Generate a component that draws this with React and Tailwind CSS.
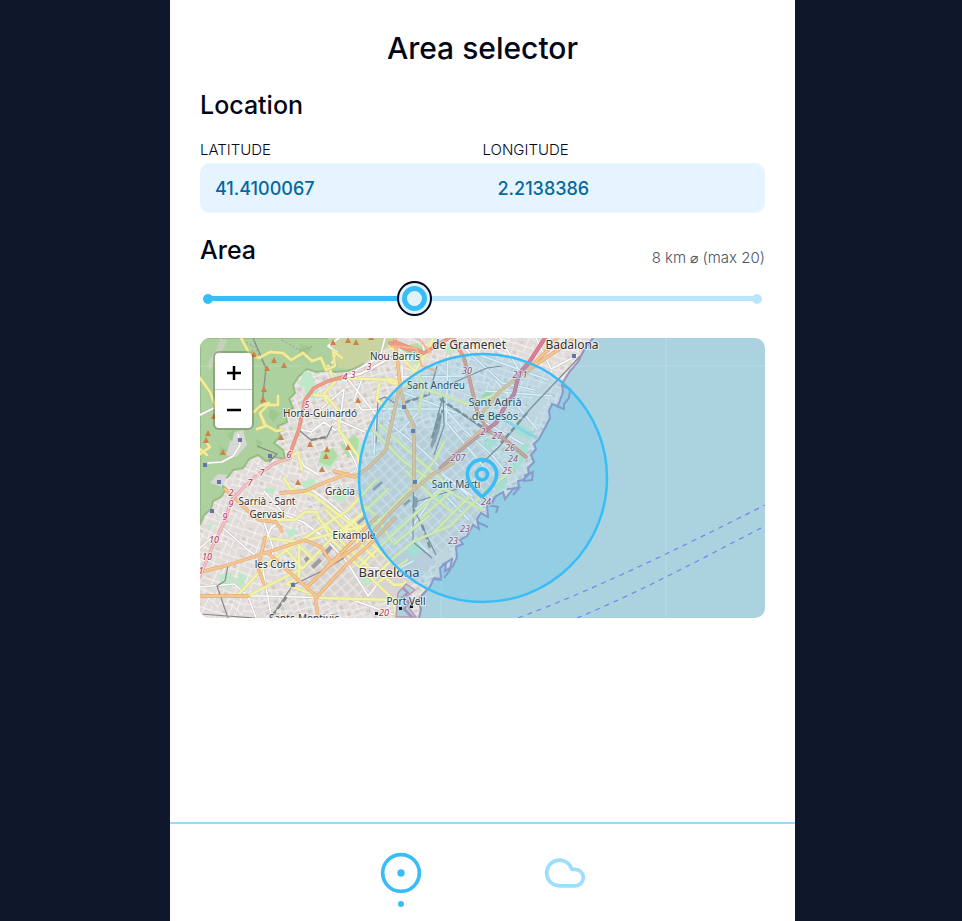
import React, { useState } from "react";
import { CircleDot, Cloud, MapPin } from "lucide-react";

const COAST =
  "M393 0L384 12L378 24L370 33L365 41L362 46L363 54L358 68L352 66L349 73L350 80L346 88L339 101L334 106L336 111L331 117L334 124L328 130L329 136L323 142L318 143L319 149L313 151L305 161L303 154L295 159L292 165L287 166L288 179L281 175L277 181L279 191L273 187L267 198L260 202L263 206L256 209L257 219L253 228L245 233L246 225L240 230L241 241L234 240L230 249L224 255L218 262L221 271L219 280";
const LAND = COAST + "L0 280L0 0Z";
const FOREST =
  "M0 0H196L187 6L178 17L167 21L159 29L147 33L135 34L128 32L117 34L107 31L99 38L93 47L95 55L89 61L93 70L85 74L87 84L78 88L80 98L74 105L83 112L85 121L75 119L66 123L58 117L49 121L43 130L33 132L28 139L17 143L26 151L21 159L13 163L11 171L4 177L0 187Z";

const PARKS = [
  "M104 33l8 3l3 10l-7 6l-9-5z", "M104 47l14 3l-3 11l-10-2z", "M151 108l9-4l7 6l-6 7l-9 3z",
  "M121 114l12-3l6 8l-9 12l-12-4z", "M139 148l9 5l-4 12l-12-4z", "M101 144l13-4l3 8l-12 5z",
  "M20 237l11-3l5 10l-8 8l-9-6z", "M39 234l8 4l-5 12l-6-4z", "M86 193l8-3l4 5l-9 5z",
  "M206 208l11-6l8 8l-12 10z", "M214 13l9 3l-4 13l-8-5z", "M246 5l11 5l-6 7l-8-5z",
  "M282 107l9-8l7 4l-10 12z", "M318 85l15 8l-3 9l-17-8z", "M316 111l13-7l-4 16l-9 14l-5-5z",
  "M237 155l9 3l-6 8l-7-4z", "M296 147l12-8l-3 10l-10 7z", "M131 39l9-2l-5 8z",
  "M6 188l7-3l-3 8z", "M65 150l12 1l-4 5l-9-2z", "M161 242l7-5l7 6l-10 5z", "M203 158l8 2l-3 7l-7-3z",
];

const RAIL = [
  "M232 100L243 58L244 88L234 117M246 66L258 73L286 93", "M176 105L178 62L185 59L196 66",
  "M214 88L213 204L232 220", "M215 164L257 151M213 169L236 217", "M388 10L330 71L300 108L282 125",
  "M204 64L229 57L237 28M248 47L287 30L302 28", "M0 276L55 280", "M27 228L101 202",
  "M72 278L93 247L122 233L144 220", "M100 93L111 102L127 99L132 88", "M57 108L77 116L69 124",
  "M28 227L25 243L17 248L28 280M53 0L66 30L62 66",
];

const WHITE_ROADS = [
  "M0 77L14 70L20 62M132 25L137 14L128 8L139 0M162 41L154 62L162 72L195 70",
  "M99 91L111 94L124 84L135 92L141 89", "M88 119L98 115L104 128L119 137",
  "M38 96L40 107L33 118L22 124L8 125", "M0 210L23 190L48 212L61 221L71 277M64 184L73 210L72 230",
  "M64 153L85 177L103 184L125 200L147 224L168 258", "M111 151L125 161L152 184L173 206",
  "M0 249L34 246L48 258L56 280M63 210L71 190L85 179M0 258H64L194 262",
  "M175 71H245L263 91L292 117L305 133M186 83L222 112L241 130",
  "M195 39L264 38M202 27L203 62M222 71L199 94M194 51L257 75M248 17L246 84L285 130",
  "M246 141L208 194L228 214M216 171L250 142L285 172M228 140L269 182M242 136L272 158",
  "M122 70L144 51L139 92L156 126L160 137M131 79L165 94M148 41L176 77L174 116",
  "M262 8L302 45L335 52M274 15L348 42M285 53L352 58M295 42L337 91M272 77L323 106",
  "M185 0L180 19L151 35M221 0L225 16M300 0L318 30M336 0L351 31L378 17",
  "M168 258L183 239L213 223M158 229L179 230M150 261L195 277",
];

const YELLOW_ROADS = [
  "M128 28L135 44L124 55L138 72L139 92L158 118L159 130", "M114 57L125 58L127 65M144 40L192 42M179 46L177 62L187 69",
  "M81 125L98 114L102 132", "M84 140L91 151L113 157L153 188L182 216L200 231",
  "M68 182H95L105 174H116L132 202L156 226L194 262L196 280", "M64 200L100 204L147 192L177 185L217 145L235 122L244 104",
  "M38 257L68 225L103 201L148 172L176 142", "M48 258L103 230L135 197L164 174L188 151",
  "M99 209V239L86 246L121 260L196 262", "M126 172L150 197L174 219", "M118 180L146 208L168 228",
  "M95 203L113 222M88 214L101 229M160 228L190 199L228 164L247 147",
  "M175 238L196 218L214 203L250 188L272 166L298 143L312 133", "M173 92L202 122L234 145L282 172",
  "M180 87L214 118L245 145", "M190 41L240 56L270 67L303 53", "M190 9L218 36L224 46L219 73",
  "M180 243L207 222M194 206L229 178M221 180L251 154M233 195L269 159", "M162 167L176 177L192 204",
  "M152 182L164 195M140 196L169 169M206 133L227 154L252 174", "M189 44L205 48L226 16L233 0",
  "M194 268L205 244M187 241L194 247L206 246",
];

const ORANGE_ROADS = [
  "M25 151L48 173L59 182L76 184L82 193M81 155L105 153L126 144L148 136",
  "M0 234L25 228L105 202L121 209L132 226M65 200L58 230L64 246M0 258H48",
  "M68 215L115 257L118 280M107 249L131 226L157 208L176 191L189 176L211 154L233 136L253 125",
  "M116 260L145 228L169 207L195 180M122 234L149 207L177 179M134 133L155 139L169 129L186 112L191 88L200 47L195 0",
  "M195 0L200 47L205 70L214 88V150", "M283 74L300 53L325 34L351 9L357 0",
  "M325 36L338 25L364 8L374 0M240 130L266 106L286 88",
];

const YELLOW_TRACKS = [
  "M41 0L49 15L59 20L70 14L83 15L91 22L103 15L112 23L121 20L126 32L135 28L133 13L142 20",
  "M0 40L10 54L16 70M78 58V67L68 67L60 75L64 86L76 93L82 92M0 116L10 109L6 104",
  "M54 74L60 68L69 65M60 75L66 88L57 91M0 111L7 117",
];

const PEAKS = [
  [54, 17], [74, 23], [84, 28], [67, 31], [64, 52], [63, 62], [14, 79], [8, 96], [6, 103], [23, 115],
  [81, 100], [110, 107], [127, 112], [126, 119], [148, 110], [122, 132], [98, 145], [158, 63],
  [133, 5], [148, 3], [156, 5], [171, 0],
];

const STATIONS = [[40, 102], [70, 118], [5, 127], [19, 144], [12, 173], [93, 247], [204, 69], [213, 93], [374, 18], [215, 144]];

const PLACES = [
  { x: 269, y: 11, size: 12, text: "de Gramenet" },
  { x: 372, y: 11, size: 12, text: "Badalona" },
  { x: 195, y: 22, size: 10, text: "Nou Barris" },
  { x: 236, y: 51, size: 10, text: "Sant Andreu" },
  { x: 295, y: 68, size: 11, text: "Sant Adrià" },
  { x: 295, y: 82, size: 11, text: "de Besòs" },
  { x: 120, y: 79, size: 10, text: "Horta-Guinardó" },
  { x: 256, y: 150, size: 10, text: "Sant Martí" },
  { x: 140, y: 157, size: 10, text: "Gràcia" },
  { x: 67, y: 167, size: 10, text: "Sarrià - Sant" },
  { x: 67, y: 180, size: 10, text: "Gervasi" },
  { x: 154, y: 201, size: 10, text: "Eixample" },
  { x: 75, y: 230, size: 10, text: "les Corts" },
  { x: 189, y: 239, size: 13, text: "Barcelona" },
  { x: 206, y: 267, size: 10, text: "Port Vell" },
  { x: 104, y: 284, size: 10, text: "Sants-Montjuïc" },
];

const EXITS = [
  [107, 70, "5"], [145, 42, "4"], [153, 40, "3"], [169, 32, "3"], [89, 120, "6"], [62, 138, "7"],
  [50, 148, "7"], [31, 158, "2"], [31, 169, "9"], [25, 182, "9"], [14, 205, "10"], [7, 222, "10"],
  [1, 236, "1"], [267, 36, "30"], [320, 40, "211"], [283, 97, "2"], [297, 101, "27"], [310, 113, "26"],
  [313, 124, "24"], [307, 136, "25"], [258, 123, "207"], [286, 167, "24"], [265, 194, "23"],
  [253, 206, "23"], [184, 278, "20"],
];

function Roads({ paths, casing, color, width }) {
  const d = paths.join("");
  return (
    <g fill="none" strokeLinejoin="round" strokeLinecap="round">
      <path d={d} stroke={casing} strokeWidth={width + 1} />
      <path d={d} stroke={color} strokeWidth={width} />
    </g>
  );
}

function CityMap() {
  return (
    <svg
      viewBox="0 0 565 280"
      preserveAspectRatio="xMidYMid slice"
      className="block h-full w-full font-['Noto_Sans',sans-serif]"
      role="img"
      aria-label="Map of Barcelona"
    >
      <defs>
        <pattern id="blocks" width="9" height="8" patternUnits="userSpaceOnUse" patternTransform="rotate(-42)">
          <rect width="9" height="8" fill="#dcd8d5" />
          <rect x="1.5" y="1.5" width="6" height="5" fill="#d6d2cf" />
          <path d="M0 0H9M0 0V8" stroke="#f4f3f2" strokeWidth="1.2" />
        </pattern>
        <pattern id="lanes" width="27" height="23" patternUnits="userSpaceOnUse" patternTransform="rotate(-24)">
          <rect width="27" height="23" fill="#dfdbd8" />
          <path d="M2 2h4v2h-4zM9 7h5v2h-5zM18 3h3v4h-3zM22 12h3v4h-3zM4 14h6v2h-6zM14 17h4v3h-4z" fill="#d0cac6" />
          <path d="M0 0H27M0 6L12 5L27 10M0 12L15 14L27 17M0 18L13 19M0 0V23M8 0L7 12L10 23M16 0L15 14M21 8L20 23" stroke="#f4f2f0" strokeWidth="1" fill="none" />
        </pattern>
        <pattern id="suburb" width="25" height="29" patternUnits="userSpaceOnUse" patternTransform="rotate(18)">
          <rect width="25" height="29" fill="#e1dcda" />
          <path d="M2 2h3v3h-3zM10 8h5v2h-5zM18 15h3v4h-3zM5 20h4v2h-4z" fill="#d3ccc8" />
          <path d="M0 0H25M0 6L25 8M0 14L12 12L25 18M0 23L25 24M0 0V29M7 0L8 14M14 7L12 29M20 0L19 24" stroke="#f7f4f2" strokeWidth="1" fill="none" />
        </pattern>
        <clipPath id="land"><path d={LAND} /></clipPath>
      </defs>

      <rect width="565" height="280" fill="#aad3df" />
      <g clipPath="url(#land)">
        <rect width="400" height="280" fill="url(#lanes)" />
        <path d="M0 150L30 130L90 110L120 140L100 190L50 280H0ZM190 0H400V60L300 110L250 60L200 40Z" fill="url(#suburb)" />
        <path d="M110 185L170 130L213 88L262 95L312 130L290 172L215 245L180 262L120 262L95 228Z" fill="url(#blocks)" />
        <path d="M180 232L215 205L235 220L215 245L190 262H172Z" fill="#d8d4d6" />
        <path d="M335 55L349 43L344 66L326 96L316 91ZM310 92L333 100L319 128L306 124ZM236 218L247 211L253 220L235 242Z" fill="#e0ddd6" />
        <path d={FOREST} fill="#add19e" stroke="#98bd83" strokeWidth="2" />
        <path d="M128 0H196L174 20L150 31L139 30L132 14Z" fill="#c8d4a0" />
        <path d="M20 0l-4 12l-8 12l1 10l5-9l8-10l5-13z" fill="#c3d2ba" />
        <path d="M10 145L18 136L27 137L22 149ZM33 95L43 92L47 107L36 119L26 117Z" fill="#d6d8d3" />
        <path d="M100 6l12 3l-4 7l-9-3zM27 96l8-5l-3 13zM70 70l10 5l-6 9l-5-5zM20 108l7 4l-8 7zM55 100l8 5l-5 7z" fill="#9fc98e" />
        <path d={PARKS.join("")} fill="#bfe8c8" />
        <path d="M199 10l18-5l10 8l-12 8zM281 58l8-7l5 7l-9 8zM122 113l11-3l5 8l-8 10l-11-4zM140 107l11-4l4 6l-9 7zM145 104l9-8l5 6l-3 16l-9 2z" fill="#b3dba6" />

        <g fill="#9d9c9f">
          <path d="M238 74l4 2l-2 14l-4 13l-4 8l-2-4l4-10zM104 221l4-4l3 3l-5 5zM111 228l8-8l3 3l-8 8zM122 216l8-9l3 3l-8 9zM214 158l4 2l-1 10l-5-1z" />
          <path d="M172 151l9-8l2 2l-9 8zM203 166l6-5l2 2l-6 5zM155 186l9-8l2 2l-9 8z" />
        </g>
        <Roads paths={WHITE_ROADS} casing="#c5c1bf" color="#ffffff" width={1.6} />
        <g fill="none" stroke="#868889">
          <path d={RAIL.join("")} strokeWidth="1.2" />
          <path d="M232 100L243 72M204 65L227 57M240 61L287 92M327 75L301 105M72 278L88 257M111 102L127 99M222 187L230 210" strokeWidth="2.5" strokeDasharray="6 3" />
        </g>
        <Roads paths={YELLOW_ROADS} casing="#d8d896" color="#f2f3a9" width={2.4} />
        <Roads paths={ORANGE_ROADS} casing="#dda36d" color="#f7c58f" width={2.4} />
        <Roads paths={["M195 4L224 15L239 6L249 0M190 5L210 12M253 0L264 20L270 43L277 73L288 93L303 100L326 119", "M90 116L99 91L105 62L114 50L128 43L147 38"]} casing="#d98573" color="#ee9c85" width={2.6} />
        <Roads paths={["M147 38L160 36L172 30L190 20"]} casing="#c9a8a0" color="#ffffff" width={2.4} />
        <Roads paths={["M345 0L330 23L319 36L314 56L304 70L296 85L285 93"]} casing="#c75f7d" color="#df7d92" width={3} />
        <Roads paths={["M285 93L266 108L240 130"]} casing="#c7857d" color="#e2a199" width={2} />
        <Roads paths={["M60 135L75 125L90 120M56 138L45 148L31 163L25 183L13 207L6 224L0 239"]} casing="#dc8e98" color="#f5c3c6" width={2} />
        <path d="M190 8L216 10L222 28L237 33M219 1L231 15" fill="none" stroke="#f6b58e" strokeWidth="2" />
        <path d="M291 75L337 100" fill="none" stroke="#9fd6e2" strokeWidth="3" />
        <g fill="none" stroke="#9a9c98" strokeDasharray="2 2">
          <path d="M53 0L58 16L66 31L63 62M39 0L53 8L52 16M82 2L101 13L113 8" />
        </g>
        <Roads paths={YELLOW_TRACKS} casing="#ceca77" color="#f2ed9b" width={2.4} />
        <path d="M198 255l8-9l9 6l-7 6l6 6l-5 6l7 9h-20z" fill="#aad3df" stroke="#b89ab8" strokeWidth="1.5" />
        <path d="M203 250l5 5l-6 5l7 4l-5 7l8 8" fill="none" stroke="#aa92b6" strokeWidth="2.5" />
      </g>
      <path d={COAST} fill="none" stroke="#9b91bd" strokeWidth="2" />
      <path d="M362 47l8 4l-1 9l-5 6v5l-8-3M324 138l9-4l-1 8l-9 1M307 151l12-1l-6 7M287 167l11 2l-2 6M277 184l11 5M242 227l10-6l-2 11l-6 8M233 241l9 1" fill="none" stroke="#9b91bd" strokeWidth="2" />

      <path d="M329 28H565M466 0V280M241 240V280M0 28H100" stroke="#fff" strokeOpacity=".18" fill="none" />
      <path d="M318 280C395 251 470 215 565 167M377 280C440 254 505 219 565 188" fill="none" stroke="#7683ec" strokeWidth="1.2" strokeDasharray="5 5" />

      {PEAKS.map(([x, y]) => (
        <path key={`${x}-${y}`} d={`M${x} ${y - 4}l3 6h-6z`} fill="#d08148" />
      ))}
      {STATIONS.map(([x, y]) => (
        <rect key={`${x}-${y}`} x={x - 2} y={y - 2} width="4" height="4" fill="#6673ad" />
      ))}
      <path d="M175 274h3v3h-3zM199 269h3v3h-3zM210 267h3v3h-3z" fill="#111" />

      <g textAnchor="middle" paintOrder="stroke" stroke="#fff" strokeOpacity=".65" strokeLinejoin="round">
        {EXITS.map(([x, y, text]) => (
          <text key={`${x}-${y}`} x={x} y={y} fontSize="9" fontStyle="italic" strokeWidth="2" fill="#b5304b">{text}</text>
        ))}
        {PLACES.map(({ x, y, size, text }) => (
          <text key={text} x={x} y={y} fontSize={size} strokeWidth="2" fill="#333333">{text}</text>
        ))}
      </g>

      <circle cx="283" cy="140" r="124" fill="#38bdf8" fillOpacity=".2" stroke="#38bdf8" strokeWidth="2.5" />
      <MapPin x="260" y="118" width="44" height="44" color="#38bdf8" />
    </svg>
  );
}

function RadiusSlider({ value, onChange }) {
  const min = 1;
  const max = 20;
  const filled = ((value - min) / (max - min)) * 100;
  return (
    <div className="grid h-[35px] items-center">
      <div className="col-start-1 row-start-1 mx-[3px] flex items-center">
        <span className="size-[10px] rounded-full bg-[#38bdf8]" />
        <span className="-mx-1 flex h-[5px] flex-1 bg-[#bae6fd]">
          <span className="bg-[#38bdf8]" style={{ width: `${filled}%` }} />
        </span>
        <span className="size-[10px] rounded-full bg-[#bae6fd]" />
      </div>
      <input
        id="area"
        type="range"
        min={min}
        max={max}
        step="0.1"
        value={value}
        onChange={(e) => onChange(Number(e.target.value))}
        className="col-start-1 row-start-1 w-full cursor-pointer appearance-none bg-transparent outline-none [&::-webkit-slider-thumb]:size-[25px] [&::-webkit-slider-thumb]:appearance-none [&::-webkit-slider-thumb]:rounded-full [&::-webkit-slider-thumb]:border-[5px] [&::-webkit-slider-thumb]:border-solid [&::-webkit-slider-thumb]:border-[#38bdf8] [&::-webkit-slider-thumb]:bg-[#e0f2fe] [&::-webkit-slider-thumb]:shadow-[0_0_0_3px_#e0f2fe,0_0_0_5px_#020617]"
      />
    </div>
  );
}

export default function App() {
  const [latitude, setLatitude] = useState("41.4100067");
  const [longitude, setLongitude] = useState("2.2138386");
  const [diameter, setDiameter] = useState(8.1);
  const field = "h-[50px] w-full min-w-0 bg-[#e5f4fe] px-[15px] text-lg font-[550] text-[#0369a1] outline-none";

  return (
    <div className="flex min-h-screen justify-center bg-[#0f172a] pl-[3px] font-['Inter',sans-serif] text-[#020617] [font-optical-sizing:none]">
      <div className="flex w-full max-w-[625px] flex-col bg-white">
        <main className="flex-1 px-[30px] pt-7">
          <h1 className="text-center text-3xl leading-10 font-[550]">Area selector</h1>

          <section className="mt-5">
            <h2 className="text-[25px] leading-[35px] font-[550]">Location</h2>
            <div className="mt-4 grid grid-cols-2">
              <div>
                <label htmlFor="latitude" className="block pb-[2px] text-[15px] leading-[22px] font-light">LATITUDE</label>
                <input id="latitude" value={latitude} onChange={(e) => setLatitude(e.target.value)} className={`${field} rounded-l-[10px]`} />
              </div>
              <div>
                <label htmlFor="longitude" className="block pb-[2px] text-[15px] leading-[22px] font-light">LONGITUDE</label>
                <input id="longitude" value={longitude} onChange={(e) => setLongitude(e.target.value)} className={`${field} rounded-r-[10px]`} />
              </div>
            </div>
          </section>

          <section className="mt-5">
            <div className="flex items-end justify-between">
              <h2 className="text-[25px] leading-[35px] font-[550]">
                <label htmlFor="area">Area</label>
              </h2>
              <output htmlFor="area" className="text-[15px] leading-5 font-light text-[#4b5563]">
                {Math.round(diameter)} km <span className="text-sm font-thin">⌀</span> (max 20)
              </output>
            </div>
            <div className="mt-[13px]">
              <RadiusSlider value={diameter} onChange={setDiameter} />
            </div>
          </section>

          <section className="relative mt-[22px] h-[280px] overflow-hidden rounded-[10px]">
            <CityMap />
            <div className="absolute top-[13px] left-[13px] flex w-[41px] flex-col overflow-hidden rounded-md border-2 border-black/20 bg-white bg-clip-padding text-black">
              <button type="button" aria-label="Zoom in" className="flex h-[37px] items-center justify-center border-b border-[#ccc] pt-[3px]">
                <svg viewBox="0 0 14 14" className="size-[14px]" fill="none" stroke="currentColor" strokeWidth="2.5"><path d="M0 7H14M7 0V14" /></svg>
              </button>
              <button type="button" aria-label="Zoom out" className="flex h-[38px] items-center justify-center pt-[2px]">
                <svg viewBox="0 0 14 14" className="size-[14px]" fill="none" stroke="currentColor" strokeWidth="2.5"><path d="M0 7H14" /></svg>
              </button>
            </div>
          </section>
        </main>

        <nav className="mt-8 flex h-[99px] justify-center gap-[120px] border-t-2 border-[#93dcfd] pt-[27px]">
          <a href="#area-selector" aria-label="Area selector" aria-current="page" className="flex flex-col items-center gap-[6px] text-[#38bdf8]">
            <CircleDot size={44} />
            <span className="size-[6px] rounded-full bg-[#38bdf8]" />
          </a>
          <a href="#weather" aria-label="Weather" className="text-[#9bdefe]">
            <Cloud size={44} />
          </a>
        </nav>
      </div>
    </div>
  );
}
